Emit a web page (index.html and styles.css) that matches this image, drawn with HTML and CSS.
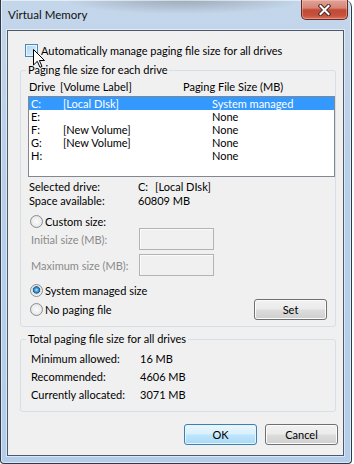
FILE: index.html
```html
<!DOCTYPE html>
<html lang="en">

<head>
    <meta charset="UTF-8">
    <meta name="viewport" content="width=device-width, initial-scale=1.0">
    <title>Virtual Memory</title>
    <link rel="stylesheet" href="styles.css">
</head>

<body>
    <div class="window">
        <!-- Title bar -->
        <div class="titlebar">
            <span class="title">Virtual Memory</span>
            <button class="close-btn" aria-label="Close">
                <svg width="13" height="12" viewBox="0 0 13 12">
                    <path d="M2.5 2 L10.5 10 M10.5 2 L2.5 10" stroke="#4a2a24" stroke-width="4" stroke-linecap="square" />
                    <path d="M2.5 2 L10.5 10 M10.5 2 L2.5 10" stroke="#fff" stroke-width="2" stroke-linecap="square" />
                </svg>
            </button>
        </div>

        <div class="client">
            <div class="auto-row">
                <span class="checkbox"></span>
                <span>Automatically manage paging file size for all drives</span>
                <svg class="cursor" width="12" height="19" viewBox="0 0 12 19">
                    <path d="M0.5 0.5 V16 L4.3 12.3 L7 18.3 L9 17.4 L6.4 11.5 H11.5 Z" fill="#fff" stroke="#000" stroke-width="1" stroke-linejoin="miter" />
                </svg>
            </div>

            <!-- Drives -->
            <fieldset class="group drives">
                <legend>Paging file size for each drive</legend>
                <div class="list-head">
                    <span>Drive</span>
                    <span>[Volume Label]</span>
                    <span>Paging File Size (MB)</span>
                </div>
                <div class="listbox">
                    <div class="list-row selected"><span>C:</span><span>[Local DIsk]</span><span>System managed</span></div>
                    <div class="list-row"><span>E:</span><span></span><span>None</span></div>
                    <div class="list-row"><span>F:</span><span>[New Volume]</span><span>None</span></div>
                    <div class="list-row"><span>G:</span><span>[New Volume]</span><span>None</span></div>
                    <div class="list-row"><span>H:</span><span></span><span>None</span></div>
                </div>

                <div class="info">
                    <span>Selected drive:</span>
                    <span>C:<span class="vol">[Local DIsk]</span></span>
                    <span>Space available:</span>
                    <span>60809 MB</span>
                </div>

                <div class="radio-row custom"><span class="radio"></span>Custom size:</div>
                <div class="size-row first">
                    <span class="size-label">Initial size (MB):</span>
                    <span class="textbox"></span>
                </div>
                <div class="size-row">
                    <span class="size-label">Maximum size (MB):</span>
                    <span class="textbox"></span>
                </div>
                <div class="radio-row system"><span class="radio checked"></span>System managed size</div>
                <div class="radio-row nopaging">
                    <span class="radio"></span>No paging file
                    <button class="btn set-btn">Set</button>
                </div>
            </fieldset>

            <!-- Totals -->
            <fieldset class="group totals">
                <legend>Total paging file size for all drives</legend>
                <div class="totals-grid">
                    <span>Minimum allowed:</span><span>16 MB</span>
                    <span>Recommended:</span><span>4606 MB</span>
                    <span>Currently allocated:</span><span>3071 MB</span>
                </div>
            </fieldset>

            <div class="dialog-buttons">
                <button class="btn default">OK</button>
                <button class="btn">Cancel</button>
            </div>
        </div>
    </div>
</body>

</html>
```

FILE: styles.css
```css
/* Virtual Memory dialog, Windows 7 look */

* {
    box-sizing: border-box;
}

body {
    margin: 0;
    background: #fff;
    font-family: Lato, "Liberation Sans", sans-serif;
    font-size: 11px;
    color: #000;
}

button {
    font: inherit;
    color: inherit;
    padding: 0;
    cursor: default;
}

.window {
    width: 352px;
    height: 464px;
    border: 1px solid #2e3a47;
    border-top: 0;
    border-radius: 0 7px 4px 4px;
    padding: 0 7px 7px 6px;
    background:
        radial-gradient(ellipse 120px 14px at 52% 0, rgba(110, 116, 124, 0.45), transparent),
        linear-gradient(to bottom, #c4d6ea, #b7cfe9 40%, #b3cdea);
    box-shadow: inset 0 0 0 1px rgba(255, 255, 255, 0.55);
}

/* Title bar */

.titlebar {
    height: 30px;
    display: flex;
    justify-content: space-between;
    align-items: flex-start;
}

.title {
    padding-left: 1px;
    line-height: 30px;
    font-size: 11.5px;
    color: #111;
}

.close-btn {
    width: 47px;
    height: 20px;
    margin-right: -4px;
    display: flex;
    justify-content: center;
    align-items: center;
    border: 1px solid #6a2a20;
    border-top: 0;
    border-radius: 0 0 5px 5px;
    background: linear-gradient(to bottom, #e2a297 0%, #d48576 42%, #c24a36 52%, #c5503b 80%, #d8735e 100%);
    box-shadow: inset 0 0 0 1px rgba(255, 220, 210, 0.35);
}

/* Client area */

.client {
    height: 426px;
    border: 1px solid #4d5966;
    background-color: #f0f0f0;
    box-shadow: 0 0 0 1px rgba(255, 255, 255, 0.5);
}

.auto-row {
    position: relative;
    margin: 13px 0 0 17px;
    height: 13px;
    display: flex;
    align-items: center;
    gap: 3px;
    line-height: 13px;
}

.checkbox {
    width: 13px;
    height: 13px;
    flex: none;
    border: 1px solid #4f86b2;
    background: linear-gradient(135deg, #a7d4f2, #e3f3fc);
    box-shadow: inset 0 0 0 1px #e8f5fd;
}

.cursor {
    position: absolute;
    left: 8px;
    top: 5px;
}

/* Group boxes */

.group {
    margin: 6px 0 0 12px;
    width: 316px;
    min-inline-size: 0;
    padding: 0 0 6px 7px;
    border: 1px solid #d5dfe5;
    border-radius: 3px;
}

.group legend {
    margin-left: -2px;
    padding: 0 2px;
    line-height: 14px;
}

.list-head {
    margin-top: 3px;
    padding-left: 1px;
    line-height: 13px;
    display: grid;
    grid-template-columns: 31px 123px auto;
}

.listbox {
    margin-top: 3px;
    width: 307px;
    height: 81px;
    border: 1px solid #828790;
    background-color: #fff;
}

.list-row {
    height: 13px;
    line-height: 13px;
    padding-left: 2px;
    display: grid;
    grid-template-columns: 32px 149px auto;
}

.list-row.selected {
    background-color: #3399ff;
    color: #fff;
}

.info {
    margin-top: 3px;
    padding-left: 1px;
    display: grid;
    grid-template-columns: 109px auto;
    line-height: 14px;
}

.vol {
    margin-left: 7px;
}

.radio-row {
    display: flex;
    align-items: center;
    gap: 2px;
    padding-left: 2px;
    line-height: 13px;
}

.radio-row.custom {
    margin-top: 7px;
    height: 13px;
}

.radio-row.system {
    margin-top: 7px;
    height: 14px;
}

.radio-row.nopaging {
    margin-top: 2px;
    height: 21px;
}

.radio {
    width: 13px;
    height: 13px;
    flex: none;
    border-radius: 50%;
    border: 1px solid #8b8e91;
    background: radial-gradient(circle at 50% 50%, #fbfbfb 0, #ececec 55%, #d2d2d2 100%);
}

.radio.checked {
    background: radial-gradient(circle at 50% 45%, #c6ecff 0, #4aa8df 1.6px, #1b5f97 3.4px, #d6d6d6 3.9px, #f4f4f4 5.5px);
}

.size-row {
    margin-top: 4px;
    height: 22px;
    display: flex;
    align-items: center;
    color: #8a8a8a;
}

.size-row.first {
    margin-top: 0;
}

.size-label {
    width: 111px;
    padding-left: 3px;
}

.textbox {
    width: 75px;
    height: 22px;
    border: 1px solid #b3b3b3;
    background-color: #f0f0f0;
    box-shadow: inset 1px 1px 0 #fbfbfb;
}

/* Buttons */

.btn {
    width: 73px;
    height: 21px;
    border: 1px solid #707070;
    border-radius: 3px;
    background: linear-gradient(to bottom, #f2f2f2 0%, #ebebeb 48%, #dddddd 52%, #cfcfcf 100%);
    box-shadow: inset 0 0 0 1px #fbfbfb;
    line-height: 19px;
    text-align: center;
}

.btn.default {
    border-color: #3c7fb1;
    background: linear-gradient(to bottom, #eaf6fd 0%, #d9f0fc 48%, #bee6fd 52%, #a7d9f5 100%);
    box-shadow: inset 0 0 0 1px #e6f4fc;
}

.set-btn {
    margin-left: auto;
    margin-right: 8px;
}

.totals {
    margin-top: 5px;
    padding-bottom: 7px;
}

.totals-grid {
    margin-top: 4px;
    padding-left: 3px;
    display: grid;
    grid-template-columns: 109px auto;
    line-height: 18px;
}

.dialog-buttons {
    margin: 12px 5px 0 0;
    display: flex;
    justify-content: flex-end;
    gap: 8px;
}
```
